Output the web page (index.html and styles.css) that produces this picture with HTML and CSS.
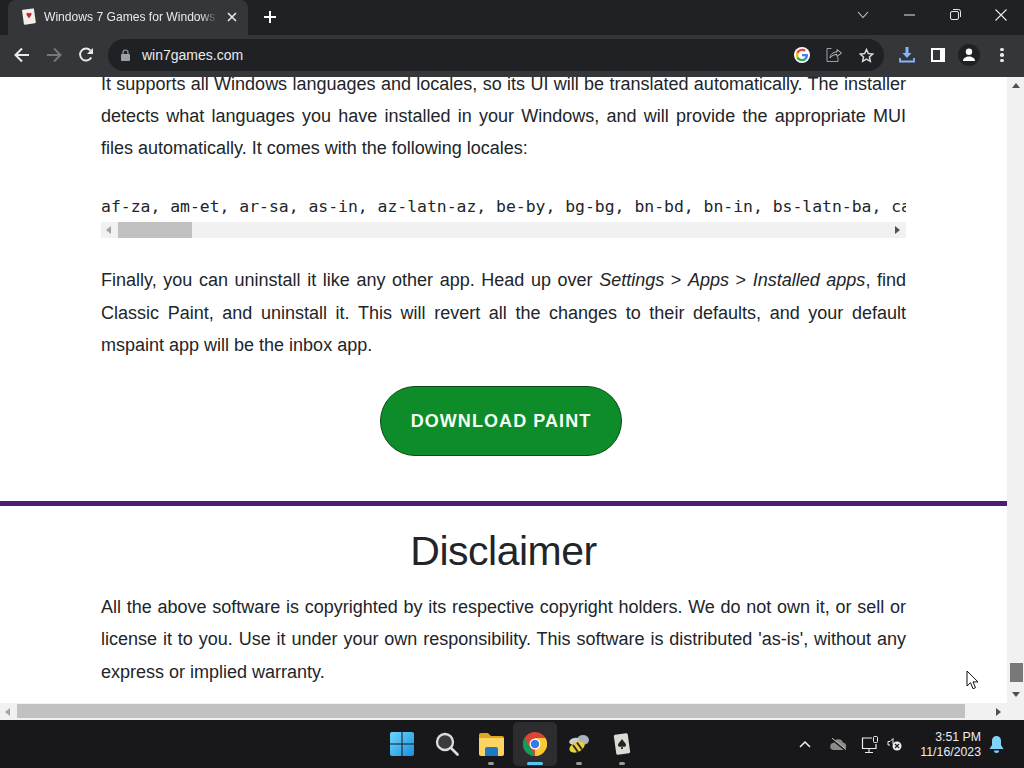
FILE: index.html
```html
<!DOCTYPE html>
<html lang="en">
<head>
<meta charset="utf-8">
<title>Windows 7 Games for Windows 11</title>
<link rel="stylesheet" href="styles.css">
</head>
<body>
<div class="tabbar">
  <div class="tab">
    <svg class="favicon" width="16" height="18" viewBox="0 0 16 18"><rect x="2" y="1" width="12" height="15" rx="1" fill="#f2efe6" transform="rotate(-8 8 9)"/><path d="M8 5.5c-1-1.6-3-.6-2.5 1C6 8 7.300 9.300 8 10.500 8.700 9.300 10 8 10.500 6.500c.5-1.600-1.500-2.600-2.500-1z" fill="#c8202c"/></svg>
    <span class="tab-title">Windows 7 Games for Windows 11</span>
    <svg class="tab-close" width="10" height="10" viewBox="0 0 10 10"><path d="M1 1l8 8M9 1l-8 8" stroke="#e8eaed" stroke-width="1.600"/></svg>
  </div>
  <svg class="newtab" width="14" height="14" viewBox="0 0 14 14"><path d="M7 1v12M1 7h12" stroke="#fff" stroke-width="2"/></svg>
  <div class="window-controls">
    <svg width="12" height="8" viewBox="0 0 12 8"><path d="M1 1l5 5.500L11 1" fill="none" stroke="#c8c9cb" stroke-width="1.100"/></svg>
    <svg class="wc-min" width="11" height="2" viewBox="0 0 11 2"><path d="M0 1h11" stroke="#e8e8e8" stroke-width="1"/></svg>
    <svg class="wc-max" width="11" height="11" viewBox="0 0 11 11"><rect x="0.500" y="2.500" width="8" height="8" rx="1.500" fill="none" stroke="#e8e8e8"/><path d="M3 .5h5.500a2 2 0 0 1 2 2V8" fill="none" stroke="#e8e8e8"/></svg>
    <svg class="wc-close" width="12" height="12" viewBox="0 0 12 12"><path d="M.5.5l11 11M11.500.5l-11 11" stroke="#e8e8e8" stroke-width="1.100"/></svg>
  </div>
</div>
<div class="toolbar">
  <svg class="nav-back" width="16" height="16" viewBox="0 0 16 16"><path d="M15 8H2M8 1.500L1.500 8 8 14.500" fill="none" stroke="#e8eaed" stroke-width="2"/></svg>
  <svg class="nav-forward" width="16" height="16" viewBox="0 0 16 16"><path d="M1 8h13M8 1.500L14.500 8 8 14.500" fill="none" stroke="#75777a" stroke-width="2"/></svg>
  <svg class="nav-reload" width="16" height="16" viewBox="0 0 16 16"><path d="M13.300 10.500A6 6 0 1 1 12.500 3.500" fill="none" stroke="#e8eaed" stroke-width="1.900"/><path d="M15 1v6H9z" fill="#e8eaed"/></svg>
  <div class="omnibox">
    <svg class="lock" width="9" height="12" viewBox="0 0 9 12"><path d="M2 5V3.500a2.500 2.500 0 0 1 5 0V5" fill="none" stroke="#9aa0a6" stroke-width="1.200"/><rect y="5" width="9" height="7" rx="1" fill="#9aa0a6"/></svg>
    <span class="url">win7games.com</span>
    <svg class="g-logo" width="16" height="16" viewBox="0 0 48 48"><circle cx="24" cy="24" r="24" fill="#fff"/><path fill="#4285f4" d="M42 24.500c0-1.400-.1-2.400-.4-3.500H24v7h10.100c-.4 2.400-1.800 4.600-4 6l6.200 4.700C40 35.300 42 30.300 42 24.500z"/><path fill="#34a853" d="M24 43c5 0 9.100-1.600 12.300-4.300L30.100 34c-1.600 1.100-3.700 1.900-6.100 1.900-4.900 0-9-3.200-10.500-7.600l-6.300 4.800C10.300 39 16.600 43 24 43z"/><path fill="#fbbc05" d="M13.500 28.300c-.8-2.400-.8-5.100 0-8.600L7.200 14.900c-2.500 5-2.500 13.200 0 18.200z"/><path fill="#ea4335" d="M24 12.100c3 0 5.200 1.300 6.500 2.500l5.500-5.400C32.900 6.500 29 5 24 5 16.600 5 10.300 9 7.200 14.900l6.300 4.800C15 15.300 19.100 12.100 24 12.100z"/></svg>
    <svg class="share" width="16" height="16" viewBox="0 0 16 16"><path d="M5.500 1.500H1v13h11V10" fill="none" stroke="#9aa0a6" stroke-width="1"/><path d="M4 11c.5-4 3-6 7-6V2.500L15.500 6 11 9.500V7.500c-3 0-5 1-7 3.500z" fill="#202124" stroke="#c2c4c7" stroke-width="1"/></svg>
    <svg class="star" width="15" height="15" viewBox="0 0 24 24"><path d="M12 2.500l2.900 6.400 7 .8-5.200 4.700 1.400 6.900-6.100-3.500-6.100 3.500 1.400-6.900L2.100 9.700l7-.8z" fill="none" stroke="#d7d9dc" stroke-width="2.400"/></svg>
  </div>
  <svg class="download" width="16" height="16" viewBox="0 0 16 16"><path d="M8 0v8" stroke="#8ab4f8" stroke-width="3"/><path d="M3.500 6h9L8 11z" fill="#8ab4f8"/><path d="M1 11v3.500h14V11" fill="none" stroke="#8ab4f8" stroke-width="1.800"/></svg>
  <div class="sidepanel"><span></span></div>
  <div class="avatar"><svg width="14" height="14" viewBox="0 0 14 14"><circle cx="7" cy="3.800" r="3.200" fill="#fff"/><path d="M1 13c0-3 3-4.500 6-4.500S13 10 13 13z" fill="#fff"/></svg></div>
  <div class="menu-dots"><i></i><i></i><i></i></div>
</div>
<div class="viewport">
  <div class="pane">
    <div class="page">
      <main class="article">
        <p class="para">It supports all Windows languages and locales, so its UI will be translated automatically. The installer detects what languages you have installed in your Windows, and will provide the appropriate MUI files automatically. It comes with the following locales:</p>
        <div class="codebox">
          <pre class="code">af-za, am-et, ar-sa, as-in, az-latn-az, be-by, bg-bg, bn-bd, bn-in, bs-latn-ba, ca-es, cs-cz, cy-gb, da-dk, de-de</pre>
          <div class="hscroll hscroll-inner">
            <span class="arrow-left"></span>
            <span class="thumb-inner"></span>
            <span class="arrow-right"></span>
          </div>
        </div>
        <p class="para">Finally, you can uninstall it like any other app. Head up over <em>Settings</em> &gt; <em>Apps</em> &gt; <em>Installed apps</em>, find Classic Paint, and uninstall it. This will revert all the changes to their defaults, and your default mspaint app will be the inbox app.</p>
        <div class="button-row"><a class="button">DOWNLOAD PAINT</a></div>
      </main>
      <hr class="rule">
      <section class="article">
        <h2 class="heading">Disclaimer</h2>
        <p class="para">All the above software is copyrighted by its respective copyright holders. We do not own it, or sell or license it to you. Use it under your own responsibility. This software is distributed 'as-is', without any express or implied warranty.</p>
      </section>
    </div>
    <div class="vscroll">
      <span class="arrow-up"></span>
      <span class="thumb-v"></span>
      <span class="arrow-down"></span>
    </div>
  </div>
  <div class="hscroll hscroll-outer">
    <span class="arrow-left"></span>
    <span class="thumb-outer"></span>
    <span class="arrow-right"></span>
  </div>
  <svg class="cursor" width="13" height="20" viewBox="0 0 13 20"><path d="M1 1v15l3.500-3.300 2.500 6 2.500-1-2.500-5.800H12z" fill="#fff" stroke="#111" stroke-width="1"/></svg>
</div>
<footer class="taskbar">
  <div class="task-icons">
    <div class="task task-start"><svg width="24" height="24" viewBox="0 0 24 24"><defs><linearGradient id="w" x1="0" y1="0" x2="1" y2="1"><stop offset="0" stop-color="#6fd6fb"/><stop offset="1" stop-color="#1a8fe0"/></linearGradient></defs><path fill="url(#w)" d="M0 2a2 2 0 0 1 2-2h9.500v11.500H0zM12.500 0H22a2 2 0 0 1 2 2v9.500H12.500zM0 12.500h11.500V24H2a2 2 0 0 1-2-2zM12.500 12.500H24V22a2 2 0 0 1-2 2h-9.500z"/></svg></div>
    <div class="task"><svg width="24" height="24" viewBox="0 0 24 24"><circle cx="10" cy="10" r="8" fill="#3a3a3d" stroke="#dcdcdc" stroke-width="2.300"/><path d="M16 16l6.500 6.500" stroke="#dcdcdc" stroke-width="2.600" stroke-linecap="round"/></svg></div>
    <div class="task"><svg width="25" height="23" viewBox="0 0 25 23"><path d="M0 2a2 2 0 0 1 2-2h7l3 3h11a2 2 0 0 1 2 2v3H0z" fill="#e3a71f"/><path d="M0 5h25v16a2 2 0 0 1-2 2H2a2 2 0 0 1-2-2z" fill="#fbd564"/><path d="M6 23v-7a2 2 0 0 1 2-2h9a2 2 0 0 1 2 2v7z" fill="#1f78c4"/></svg><i class="dot"></i></div>
    <div class="task active"><svg width="24" height="24" viewBox="0 0 48 48"><circle cx="24" cy="24" r="24" fill="#db4437"/><path d="M24 48a24 24 0 0 0 20.800-36H24z" fill="#fcc934"/><path d="M3.200 12L13.600 30 24 48A24 24 0 0 1 3.200 12z" fill="#0f9d58"/><circle cx="24" cy="24" r="11" fill="#fff"/><circle cx="24" cy="24" r="8.500" fill="#3b78e7"/></svg><i class="dot dot-active"></i></div>
    <div class="task"><svg width="22" height="20" viewBox="0 0 22 20"><ellipse cx="15" cy="6" rx="6" ry="5" fill="#aab4bd"/><ellipse cx="6" cy="7" rx="5" ry="3" fill="#c8ced3" transform="rotate(-20 6 7)"/><ellipse cx="9" cy="13" rx="8" ry="5" fill="#e9cf3a" transform="rotate(-25 9 13)"/><path d="M5 11l5 7M9 8.500l5 7" stroke="#2b2b20" stroke-width="2"/></svg><i class="dot"></i></div>
    <div class="task task-cards"><svg width="18" height="22" viewBox="0 0 18 22"><rect x="2" y="1" width="14" height="20" rx="1.500" fill="#dcdad4" transform="rotate(-8 9 11)"/><path d="M9 6c-2 3-4 4-4 6 0 2 2.500 2.500 3.500 1l-.5 3h2l-.5-3c1 1.500 3.500 1 3.500-1 0-2-2-3-4-6z" fill="#222"/></svg><i class="dot"></i></div>
  </div>
  <div class="tray">
    <svg class="tray-chevron" width="12" height="7" viewBox="0 0 12 7"><path d="M1 6l5-5 5 5" fill="none" stroke="#eee" stroke-width="1.500"/></svg>
    <svg class="tray-cloud" width="17" height="13" viewBox="0 0 17 13"><path d="M4 12a3.500 3.500 0 0 1-.5-7A5 5 0 0 1 13 4.500 3.800 3.800 0 0 1 13 12z" fill="#8b8b8b"/><path d="M1 .5L16 12.500" stroke="#1c1c1f" stroke-width="2"/><path d="M2 0l14 11.500" stroke="#ccc" stroke-width="1"/></svg>
    <svg class="tray-net" width="18" height="17" viewBox="0 0 18 17"><path d="M11 2H1.500v10.500H15V8" fill="none" stroke="#eee" stroke-width="1.200"/><path d="M8 13v3M4 16.500h8" stroke="#eee" stroke-width="1.100"/><rect x="12.500" y="0.500" width="4" height="6" rx="1" fill="none" stroke="#eee"/></svg>
    <svg class="tray-sound" width="15" height="14" viewBox="0 0 15 14"><path d="M1 4.500h2L6 1.500V7M1 4.500V8h2" fill="none" stroke="#eee" stroke-width="1"/><circle cx="10" cy="9" r="4.500" fill="#eee"/><path d="M8 7l4 4M12 7l-4 4" stroke="#1c1c1f" stroke-width="1.200"/></svg>
    <div class="clock"><span>3:51 PM</span><span>11/16/2023</span></div>
    <svg class="bell" width="15" height="17" viewBox="0 0 15 17"><path d="M7.500 0A4.500 4.500 0 0 0 3 4.500V9L.5 13h14L12 9V4.500A4.500 4.500 0 0 0 7.500 0z" fill="#7fd3f7"/><path d="M5 14.500a2.500 2.500 0 0 0 5 0z" fill="#7fd3f7"/></svg>
  </div>
</footer>
</body>
</html>
```
FILE: styles.css
```css
* { box-sizing: border-box; }
html, body { margin: 0; height: 768px; overflow: hidden; }
body { display: flex; flex-direction: column; width: 1024px; font-family: "Liberation Sans", Arial, sans-serif; background: #fff; }

.tabbar { height: 35px; flex: none; background: #202124; display: flex; align-items: flex-end; padding-left: 8px; }
.tab { width: 240px; height: 35px; background: #35363a; border-radius: 8px 8px 0 0; display: flex; align-items: center; padding: 0 11px 2px 13px; color: #e8eaed; font-size: 12.100px; }
.favicon { flex: none; margin-right: 7px; }
.tab-title { flex: 1; overflow: hidden; white-space: nowrap; -webkit-mask-image: linear-gradient(90deg, #000 90%, transparent); mask-image: linear-gradient(90deg, #000 90%, transparent); }
.tab-close { flex: none; margin-left: 9px; }
.newtab { flex: none; margin: 0 0 11px 15px; }
.window-controls { margin-left: auto; height: 35px; display: flex; align-items: center; padding: 0 17px 6px 0; }
.wc-min { margin-left: 35px; }
.wc-max { margin-left: 35px; }
.wc-close { margin-left: 34px; }

.toolbar { height: 42px; flex: none; background: #35363a; display: flex; align-items: center; padding: 0 0 2px 14px; }
.nav-forward { margin-left: 16px; }
.nav-reload { margin-left: 16px; }
.omnibox { margin-left: 14px; width: 776px; height: 32px; border-radius: 16px; background: #202124; display: flex; align-items: center; padding: 0 10px 0 13px; }
.lock { flex: none; }
.url { margin-left: 12px; color: #e8eaed; font-size: 14px; flex: 1; }
.share { margin-left: 16px; }
.star { margin-left: 17px; }
.download { margin-left: 15px; }
.sidepanel { margin-left: 16px; width: 14px; height: 14px; background: #fff; padding: 2px 5px 2px 2px; display: flex; }
.sidepanel span { flex: 1; background: #35363a; }
.avatar { margin-left: 13px; width: 22px; height: 22px; border-radius: 50%; background: #202124; display: flex; align-items: center; justify-content: center; }
.menu-dots { margin-left: 20px; width: 4px; display: flex; flex-direction: column; gap: 2px; }
.menu-dots i { width: 3.500px; height: 3.500px; border-radius: 50%; background: #e8eaed; }

.viewport { position: relative; flex: 1; min-height: 0; display: flex; flex-direction: column; }
.pane { flex: 1; min-height: 0; display: flex; }
.page { flex: 1; min-width: 0; overflow: hidden; color: #212529; }
.article { padding: 0 101px; }
.article:first-child { margin-top: -9.450px; }
.para { margin: 0; font-size: 18px; line-height: 32.400px; text-align: justify; }
.codebox { margin-top: 25.450px; }
.code { margin: 0; height: 32px; overflow: hidden; font-family: "DejaVu Sans Mono", monospace; font-size: 16.420px; line-height: 34px; white-space: pre; }
.hscroll { display: flex; align-items: center; background: #f1f1f1; }
.hscroll-inner { height: 16px; margin-bottom: 26px; }
.thumb-inner { margin-left: 7px; width: 74px; height: 100%; background: #c1c1c1; }
.arrow-left { margin-left: 5px; width: 0; height: 0; border: 4px solid transparent; border-left: 0; border-right: 5px solid #a3a3a3; }
.arrow-right { margin-left: auto; margin-right: 6px; width: 0; height: 0; border: 4px solid transparent; border-right: 0; border-left: 5px solid #505050; }
.button-row { display: flex; justify-content: center; margin-top: 25px; padding-right: 5px; }
.button { width: 242px; height: 70px; border-radius: 35px; border: 1px solid #064a16; background: #0f8c2a; color: #f2fff2; font-size: 18px; font-weight: 700; letter-spacing: 1.070px; display: flex; align-items: center; justify-content: center; }
.rule { margin: 45px 0 0; height: 5px; border: 0; background: #4f1b74; }
.heading { margin: 17px 0 0; font-weight: 400; font-size: 41px; line-height: 56px; text-align: center; letter-spacing: -0.500px; color: #212529; }
.heading + .para { margin-top: 11.400px; }

.vscroll { width: 17px; flex: none; background: #f1f1f1; display: flex; flex-direction: column; align-items: center; padding: 6px 0; }
.arrow-up { width: 0; height: 0; border: 4px solid transparent; border-top: 0; border-bottom: 5px solid #505050; }
.thumb-v { margin-top: auto; margin-left: 2px; width: 13px; height: 19px; background: #787878; }
.arrow-down { margin-top: 10px; width: 0; height: 0; border: 4px solid transparent; border-bottom: 0; border-top: 5px solid #505050; }
.hscroll-outer { height: 17px; flex: none; }
.thumb-outer { margin-left: 7px; width: 948px; height: 100%; background: #c1c1c1; border-bottom: 2px solid #f1f1f1; border-top: 1px solid #f1f1f1; }
.hscroll-outer .arrow-right { margin-right: 23px; }
.cursor { position: absolute; left: 966px; top: 593px; }

.taskbar { height: 48px; flex: none; background: #18181b; display: flex; align-items: center; position: relative; }
.task-icons { margin-left: 381px; display: flex; }
.task { position: relative; width: 44px; height: 44px; display: flex; align-items: center; justify-content: center; border-radius: 5px; }
.task-start svg { margin-left: -2px; }
.task-cards svg { margin-left: -2px; }
.task.active { background: #2d2d30; }
.dot { position: absolute; bottom: 1px; left: 50%; margin-left: -3px; width: 6px; height: 3px; border-radius: 2px; background: #9a9a9a; }
.task-cards .dot { margin-left: -4px; }
.dot-active { width: 16px; margin-left: -8px; background: #5cc4f5; }
.tray { margin-left: auto; display: flex; align-items: center; color: #eee; padding-right: 20px; }
.tray-cloud { margin-left: 19px; }
.tray-net { margin-left: 14px; }
.tray-sound { margin-left: 8px; }
.clock { margin-left: 18px; padding-top: 2px; display: flex; flex-direction: column; align-items: flex-end; font-size: 12.300px; line-height: 15px; }
.bell { margin-left: 8px; }
```
